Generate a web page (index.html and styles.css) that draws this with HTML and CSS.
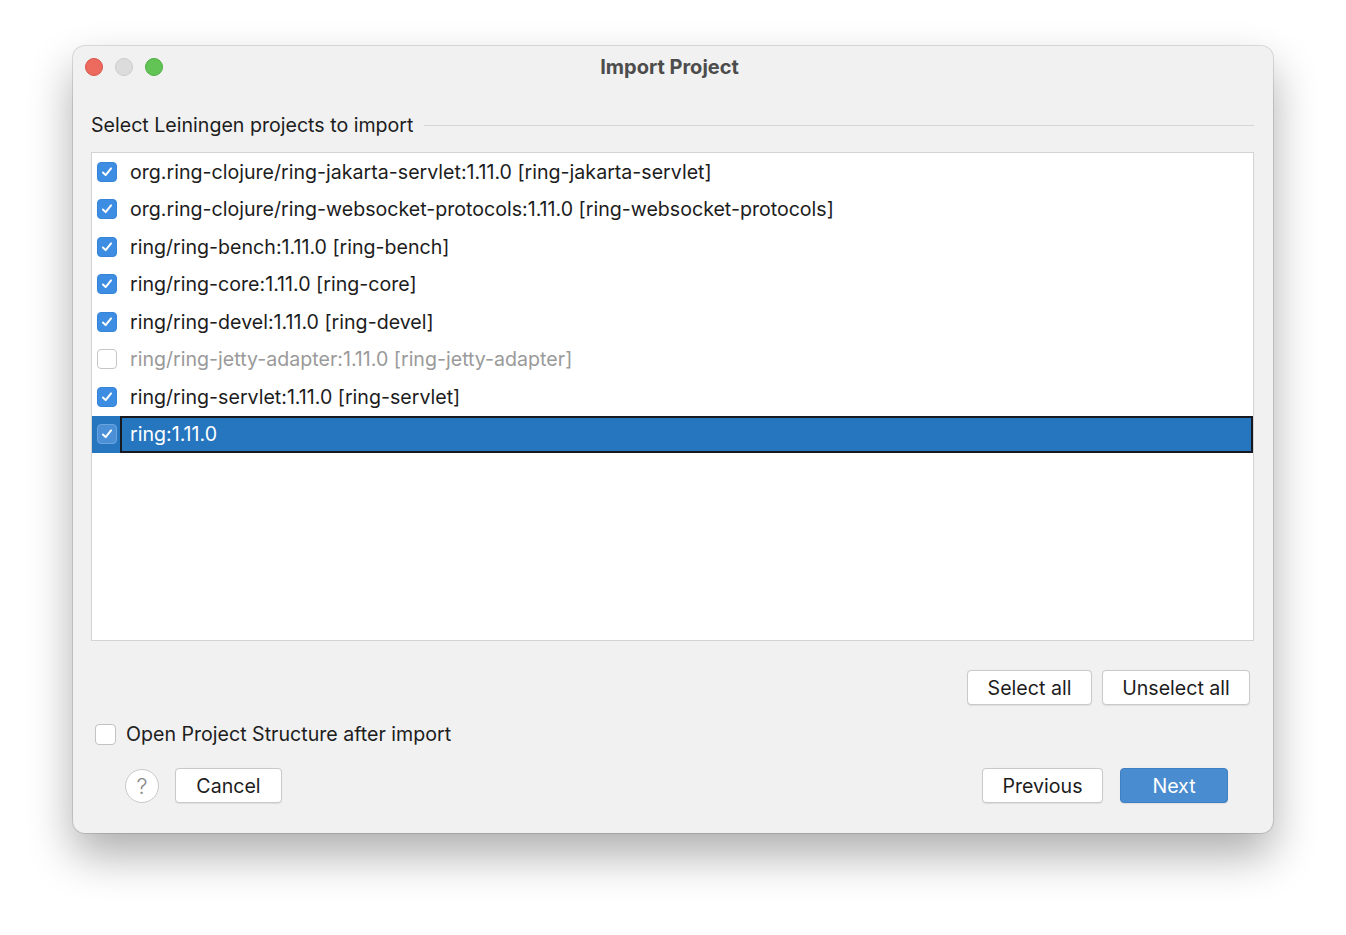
FILE: index.html
```html
<!DOCTYPE html>
<html>
<head>
<meta charset="utf-8">
<link rel="stylesheet" href="styles.css">
</head>
<body>
<div class="window">
  <div class="titlebar">
    <div class="lights">
      <span class="light red"></span>
      <span class="light gray"></span>
      <span class="light green"></span>
    </div>
    <div class="title">Import Project</div>
    <div></div>
  </div>
  <div class="content">
    <div class="section-header">
      <span class="section-label">Select Leiningen projects to import</span>
      <span class="section-line"></span>
    </div>
    <div class="list">
      <div class="row"><span class="cb checked"><svg viewBox="0 0 20 20"><path d="M5.5 10.5l3 3 6-7.5"/></svg></span><span class="row-text">org.ring-clojure/ring-jakarta-servlet:1.11.0 [ring-jakarta-servlet]</span></div>
      <div class="row"><span class="cb checked"><svg viewBox="0 0 20 20"><path d="M5.5 10.5l3 3 6-7.5"/></svg></span><span class="row-text">org.ring-clojure/ring-websocket-protocols:1.11.0 [ring-websocket-protocols]</span></div>
      <div class="row"><span class="cb checked"><svg viewBox="0 0 20 20"><path d="M5.5 10.5l3 3 6-7.5"/></svg></span><span class="row-text">ring/ring-bench:1.11.0 [ring-bench]</span></div>
      <div class="row"><span class="cb checked"><svg viewBox="0 0 20 20"><path d="M5.5 10.5l3 3 6-7.5"/></svg></span><span class="row-text">ring/ring-core:1.11.0 [ring-core]</span></div>
      <div class="row"><span class="cb checked"><svg viewBox="0 0 20 20"><path d="M5.5 10.5l3 3 6-7.5"/></svg></span><span class="row-text">ring/ring-devel:1.11.0 [ring-devel]</span></div>
      <div class="row disabled"><span class="cb"></span><span class="row-text">ring/ring-jetty-adapter:1.11.0 [ring-jetty-adapter]</span></div>
      <div class="row"><span class="cb checked"><svg viewBox="0 0 20 20"><path d="M5.5 10.5l3 3 6-7.5"/></svg></span><span class="row-text">ring/ring-servlet:1.11.0 [ring-servlet]</span></div>
      <div class="row selected"><span class="cb checked"><svg viewBox="0 0 20 20"><path d="M5.5 10.5l3 3 6-7.5"/></svg></span><span class="row-text">ring:1.11.0</span></div>
    </div>
    <div class="select-buttons">
      <button class="btn">Select all</button>
      <button class="btn">Unselect all</button>
    </div>
    <label class="option">
      <span class="cb plain"></span>
      <span>Open Project Structure after import</span>
    </label>
    <div class="footer">
      <div class="footer-left">
        <span class="help">?</span>
        <button class="btn cancel">Cancel</button>
      </div>
      <div class="footer-right">
        <button class="btn previous">Previous</button>
        <button class="btn primary">Next</button>
      </div>
    </div>
  </div>
</div>
</body>
</html>
```

FILE: styles.css
```css
* { box-sizing: border-box; }
html, body { margin: 0; padding: 0; background: #ffffff; }
body {
  font-family: Inter, "Noto Sans", "Liberation Sans", sans-serif;
  color: #1d1d1d;
  width: 1346px;
  height: 935px;
  overflow: hidden;
}
.window {
  margin: 46px 0 0 73px;
  width: 1200px;
  height: 787px;
  background: #f1f1f1;
  border-radius: 12px;
  box-shadow: 0 22px 45px rgba(0,0,0,0.32), 0 0 0 1px rgba(0,0,0,0.12);
  display: flex;
  flex-direction: column;
}
.titlebar {
  height: 42px;
  display: grid;
  grid-template-columns: 1fr auto 1fr;
  align-items: center;
  padding-right: 7px;
}
.lights { display: flex; gap: 12px; padding-left: 12px; }
.light { width: 18px; height: 18px; border-radius: 50%; display: block; }
.red { background: #ec6a5e; border: 0.5px solid #d65548; }
.gray { background: #dcdcdc; border: 0.5px solid #cbcbcb; }
.green { background: #61c454; border: 0.5px solid #4fad42; }
.title { font-weight: 700; font-size: 20px; color: #4c4c4c; }
.content {
  flex: 1;
  padding: 0 19px 0 18px;
  display: flex;
  flex-direction: column;
}
.section-header {
  margin-top: 25px;
  height: 24px;
  display: flex;
  align-items: center;
}
.section-label { font-size: 19.6px; line-height: 24px; color: #1d1d1d; }
.section-line { flex: 1; height: 1px; background: #d6d6d6; margin-left: 11px; }
.list {
  margin-top: 15px;
  height: 489px;
  background: #ffffff;
  border: 1px solid #d3d3d3;
}
.row {
  height: 37.5px;
  display: flex;
  align-items: center;
  padding-left: 5px;
  font-size: 19.6px;
}
.row-text { margin-left: 13px; white-space: nowrap; }
.cb {
  width: 20px;
  height: 20px;
  border-radius: 4px;
  display: flex;
  align-items: center;
  justify-content: center;
  flex: none;
  background: #ffffff;
  border: 1px solid #c7c7c7;
}
.cb svg { width: 20px; height: 20px; fill: none; stroke: #fff; stroke-width: 2.2; stroke-linecap: round; stroke-linejoin: round; }
.cb.checked { background: #3d8ee2; border: 1px solid #3585d9; }
.row.disabled { color: #9a9a9a; }
.row.disabled .cb { border-color: #c6c6c6; }
.row.selected { background: #2675bf; color: #ffffff; padding-left: 0; }
.row.selected .cb { margin-left: 5px; background: #4b90d6; border-color: #6aa5df; }
.row.selected .row-text {
  margin-left: 3px;
  flex: 1;
  align-self: stretch;
  display: flex;
  align-items: center;
  padding-left: 8px;
  border: 2px solid #161a20;
}
.select-buttons {
  margin-top: 29px;
  display: flex;
  justify-content: flex-end;
  gap: 10px;
  padding-right: 4px;
}
.btn {
  font-family: inherit;
  font-size: 19.6px;
  color: #1d1d1d;
  background: #ffffff;
  border: 1px solid #c9c9c9;
  border-radius: 4px;
  height: 35px;
  padding: 0;
  box-shadow: 0 0.5px 1px rgba(0,0,0,0.08);
}
.select-buttons .btn:first-child { width: 125px; }
.select-buttons .btn:last-child { width: 148px; }
.option {
  margin-top: 19px;
  display: flex;
  align-items: center;
  padding-left: 4px;
  font-size: 19.6px;
  height: 20px;
}
.option .cb { width: 21px; height: 21px; border-color: #c2c2c2; margin-right: 10px; }
.footer {
  margin-top: 24px;
  display: flex;
  justify-content: space-between;
  align-items: center;
  padding: 0 26px 0 34px;
}
.footer-left, .footer-right { display: flex; align-items: center; }
.help {
  width: 34px;
  height: 34px;
  border-radius: 50%;
  border: 1px solid #c9c9c9;
  background: #ffffff;
  display: flex;
  align-items: center;
  justify-content: center;
  color: #8a8a8a;
  font-size: 22px;
  font-weight: 300;
  margin-right: 16px;
}
.cancel { width: 107px; }
.previous { width: 121px; margin-right: 17px; }
.btn.primary {
  width: 108px;
  background: #4a8cd0;
  border-color: #3f7fc4;
  color: #ffffff;
}
```
